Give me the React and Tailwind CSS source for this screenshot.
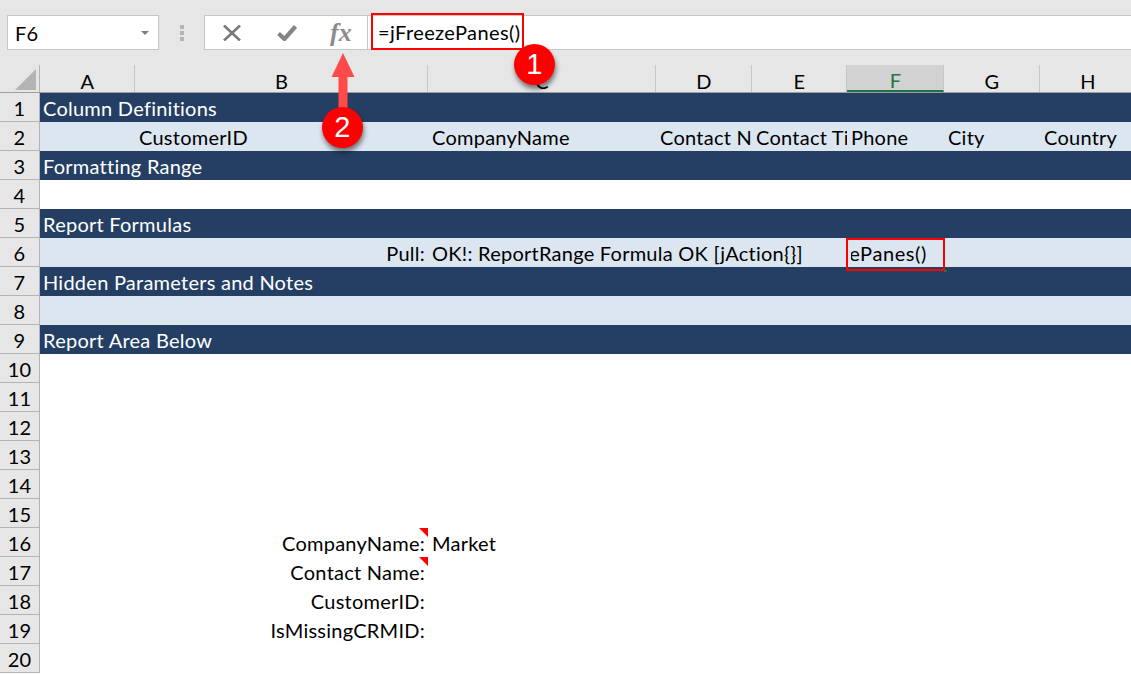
import React from "react";

const font = { fontFamily: "Lato, sans-serif" };
const columns = ["A", "B", "C", "D", "E", "F", "G", "H"];
const gridCols = "grid grid-cols-[95px_293px_228px_96px_95px_97px_96px_96px]";

const bands = {
	1: "Column Definitions",
	3: "Formatting Range",
	5: "Report Formulas",
	7: "Hidden Parameters and Notes",
	9: "Report Area Below",
};

function Band({ label }) {
	return <div className="h-full bg-[#243f63] text-white pl-[3px] whitespace-nowrap leading-[31px]">{label}</div>;
}

function DefinitionsRow() {
	const cells = ["", "CustomerID", "CompanyName", "Contact Name", "Contact Title", "Phone", "City", "Country"];
	return (
		<div className={`${gridCols} h-full bg-[#dce6f1]`}>
			{cells.map((c, i) => (
				<div key={i} className="overflow-hidden whitespace-nowrap pl-[4px] leading-[31px]">{c}</div>
			))}
		</div>
	);
}

function FormulaRow() {
	return (
		<div className={`${gridCols} h-full bg-[#dce6f1] leading-[31px]`}>
			<div />
			<div className="text-right pr-[3px]">Pull:</div>
			<div className="col-span-3 pl-[4px] whitespace-nowrap">OK!: ReportRange Formula OK [jAction{"{}"}]</div>
			<div className="relative flex justify-end pr-[17px]">
				<div className="overflow-hidden flex justify-end w-[76px] whitespace-nowrap tracking-[0.6px]">=jFreezePanes()</div>
				<div className="absolute left-[-1px] right-[-1px] top-0 bottom-[-2px] border-[2px] border-[#f00]" />
				<div className="absolute right-[-3px] bottom-[-3px] w-[3px] h-[2px] bg-[#217346]" />
			</div>
		</div>
	);
}

function FieldRow({ label, value, comment }) {
	return (
		<div className={`${gridCols} h-full leading-[31px]`}>
			<div />
			<div className="relative text-right pr-[3px] whitespace-nowrap">
				{label}
				{comment && <div className="absolute top-0 right-0 border-t-[9px] border-l-[9px] border-t-[#f00] border-l-transparent" />}
			</div>
			<div className="pl-[4px]">{value}</div>
		</div>
	);
}

function rowContent(n) {
	if (bands[n]) return <Band label={bands[n]} />;
	if (n === 2) return <DefinitionsRow />;
	if (n === 6) return <FormulaRow />;
	if (n === 8) return <div className="h-full bg-[#dce6f1]" />;
	if (n === 16) return <FieldRow label="CompanyName:" value="Market" comment />;
	if (n === 17) return <FieldRow label="Contact Name:" comment />;
	if (n === 18) return <FieldRow label="CustomerID:" />;
	if (n === 19) return <FieldRow label="IsMissingCRMID:" />;
	return null;
}

function Badge({ n, className }) {
	return (
		<div
			className={`absolute w-[41px] h-[41px] rounded-full bg-[#f00] text-white flex items-center justify-center text-[29px] shadow-[1px_4px_5px_rgba(0,0,0,0.5)] ${className}`}
			style={{ fontFamily: "'Liberation Sans', sans-serif" }}
		>
			{n}
		</div>
	);
}

export default function App() {
	const rows = Array.from({ length: 20 }, (_, i) => i + 1);

	return (
		<div className="relative w-[1131px] h-[675px] overflow-hidden bg-white text-[20px] tracking-[0.25px] text-black" style={font}>
			{/* formula bar */}
			<div className="h-[65px] bg-[#e6e6e6] flex items-start pt-[15px] pl-[7px]">
				<div className="w-[152px] h-[35px] bg-white border border-[#c6c6c6] flex items-center justify-between pl-[7px] pr-[9px]">
					<span className="text-[20px]">F6</span>
					<svg width="8" height="4" viewBox="0 0 8 4"><path d="M0 0h8L4 4z" fill="#7f7f7f" /></svg>
				</div>
				<div className="w-[45px] h-[35px] flex flex-col items-center justify-center gap-[2px]">
					<div className="w-[4px] h-[4px] bg-[#b4b4b4]" />
					<div className="w-[4px] h-[4px] bg-[#b4b4b4]" />
					<div className="w-[4px] h-[4px] bg-[#b4b4b4]" />
				</div>
				<div className="w-[164px] h-[35px] bg-white border border-[#c6c6c6] flex items-center">
					<svg className="ml-[18px]" width="18" height="16" viewBox="0 0 18 16">
						<path d="M1 0.5l16 15M17 0.5L1 15.5" stroke="#7a7a7a" strokeWidth="2.6" fill="none" />
					</svg>
					<svg className="ml-[36px]" width="20" height="16" viewBox="0 0 20 16">
						<path d="M1.5 8.5l6 5.5L18.5 1.5" stroke="#858585" strokeWidth="4.2" fill="none" />
					</svg>
					<span className="ml-[33px] text-[26px] leading-[26px] text-[#8c8c8c] italic font-bold tracking-[0px]" style={{ fontFamily: "'Liberation Serif', serif" }}>fx</span>
				</div>
				<div className="flex-1 h-[35px] bg-white border-y border-[#c6c6c6]" />
			</div>

			{/* column headers */}
			<div className="flex h-[28px] bg-[#e6e6e6] border-b border-[#9f9f9f]">
				<div className="relative w-[40px] shrink-0 border-r border-[#b4b4b4]">
					<svg className="absolute left-[15px] top-[4px]" width="21" height="21" viewBox="0 0 21 21"><path d="M21 0v21H0z" fill="#b4b4b4" /></svg>
				</div>
				<div className={gridCols}>
					{columns.map((c) => (
						<div key={c} className={`flex items-center justify-center h-[27px] leading-none pt-[5px] pl-[1px] border-r border-[#c6c6c6] ${c === "F" ? "bg-[#d2d2d2] text-[#217346] border-b-2 border-b-[#217346]" : ""}`}>
							{c}
						</div>
					))}
				</div>
			</div>

			{/* sheet rows */}
			{rows.map((n) => (
				<div key={n} className="flex h-[29px]">
					<div className="w-[40px] shrink-0 bg-[#e6e6e6] border-r border-b border-[#b4b4b4] flex items-center justify-center pt-[2px]">{n}</div>
					<div className="flex-1 min-w-0">{rowContent(n)}</div>
				</div>
			))}

			{/* annotations */}
			<div className="absolute left-[371px] top-[13px] w-[153px] h-[37px] border-[2px] border-[#f00] pl-[5px] pt-[1px] flex items-center tracking-[0.4px]">=jFreezePanes()</div>
			<svg className="absolute left-[331px] top-[53px]" width="24" height="56" viewBox="0 0 24 56">
				<path d="M12 0L23.5 24H16.5V56H7.5V24H0.5z" fill="#ff4a4a" />
			</svg>
			<Badge n="1" className="left-[514px] top-[44px]" />
			<Badge n="2" className="left-[322px] top-[107px]" />
		</div>
	);
}
